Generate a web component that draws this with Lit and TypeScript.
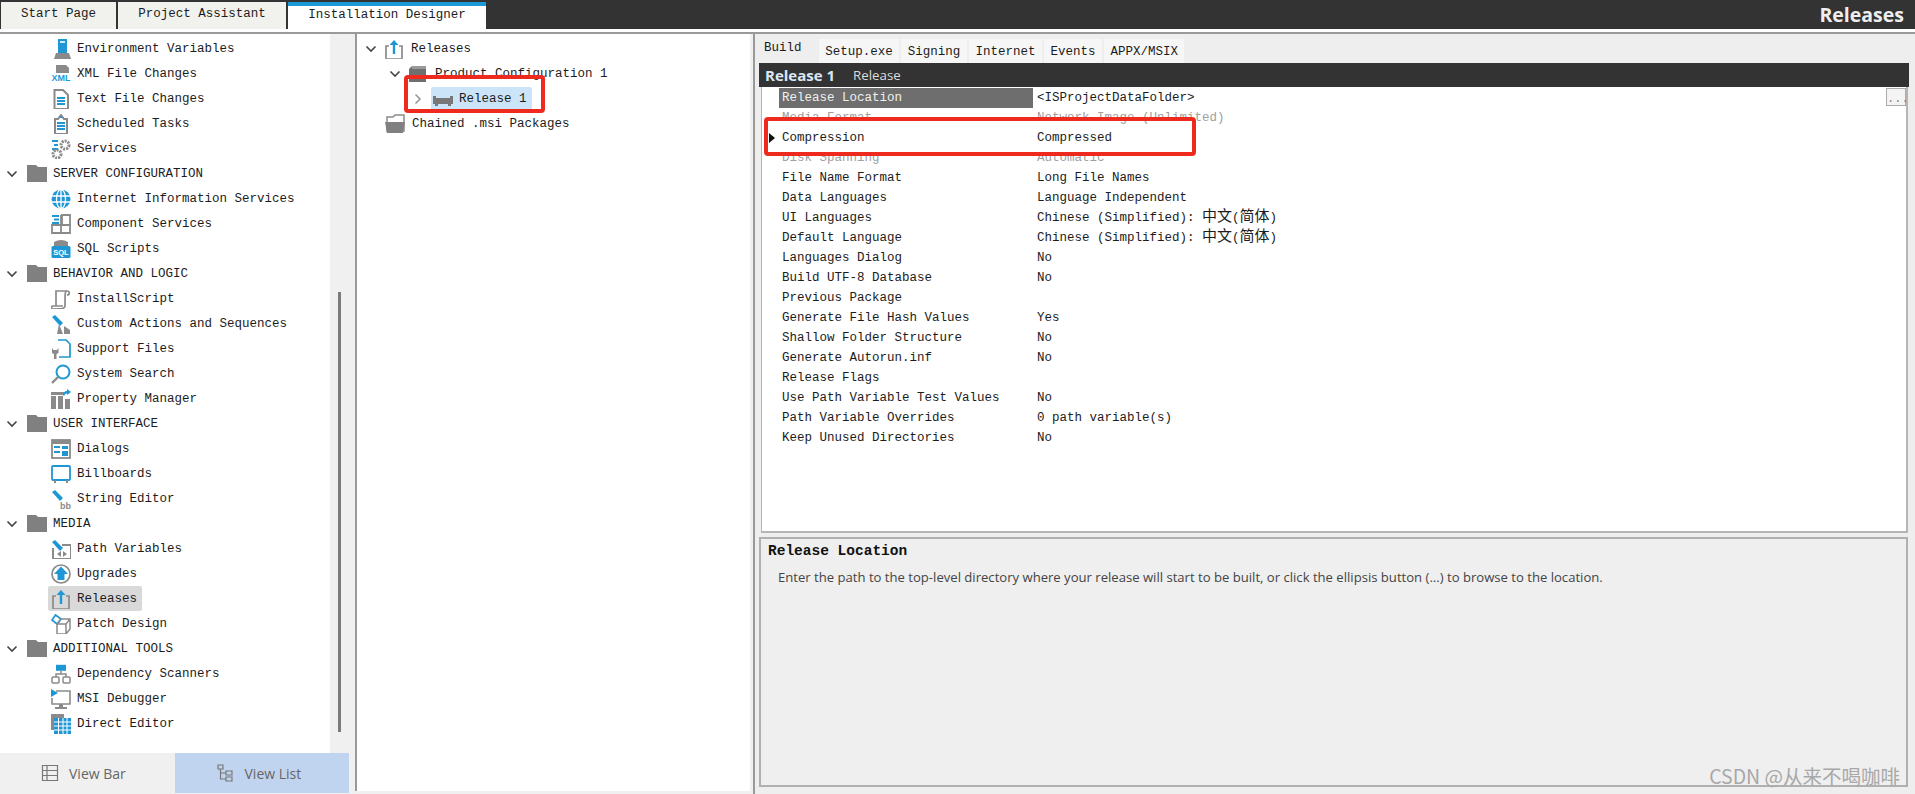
import { LitElement, html, css, svg } from "lit";
import { customElement } from "lit/decorators.js";

const B = "#1f97d4";
const G = "#8a8a8a";
const pencil = svg`<path d="M1 3 L4 1 L12 9 L9 12 Z" fill="${B}"/>`;
const icons: Record<string, unknown> = {
  env: svg`<rect x="7" y="0" width="9" height="14" fill="${B}"/><rect x="9" y="2" width="5" height="2" fill="#cfe8f6"/><path d="M3 20 L5 14 H18 L20 20 Z" fill="${G}"/>`,
  xml: svg`<path d="M5 1 H15 L18 4 V10 H5 Z" fill="${G}"/><rect x="0" y="9" width="20" height="10" fill="#fff"/><text x="10" y="17" text-anchor="middle" font-size="9" font-weight="700" font-family="Liberation Sans" fill="${B}">XML</text>`,
  text: svg`<path d="M3.5 1 H12 L17 6 V20 H3.5 Z" fill="#fff" stroke="${G}" stroke-width="2"/><path d="M6 9 H14 M6 12 H14 M6 15 H14" stroke="${B}" stroke-width="2"/>`,
  sched: svg`<path d="M4 5 H7 L10 1 L13 5 H16 V20 H4 Z" fill="#fff" stroke="${G}" stroke-width="2"/><path d="M6 9 H14 M6 12 H14 M6 15 H14" stroke="${B}" stroke-width="2"/><path d="M8 4 L10 2 L12 4 Z" fill="${B}"/>`,
  services: svg`<path d="M1 1 H7 V3 H1 Z M3 5 H7 V7 H3 Z M1 9 H7 V11 H1 Z" fill="${B}"/><circle cx="14" cy="6" r="4" fill="none" stroke="${G}" stroke-width="3" stroke-dasharray="2 1"/><circle cx="6" cy="15" r="4" fill="none" stroke="${G}" stroke-width="3" stroke-dasharray="2 1"/>`,
  iis: svg`<circle cx="10" cy="10" r="9.5" fill="${B}"/><path d="M1 7 H19 M1 13 H19 M10 0.5 V19.5" stroke="#fff" stroke-width="1.3"/><ellipse cx="10" cy="10" rx="4.5" ry="9.5" fill="none" stroke="#fff" stroke-width="1.3"/>`,
  comp: svg`<path d="M11 1 H19 V19 H1 V11 H11 Z M1 11 H19 M10 1 V19" fill="none" stroke="${G}" stroke-width="1.8"/><path d="M1 1 H8 V3 H1 Z M3 4.5 H8 V6.5 H3 Z M1 8 H8 V10 H1 Z" fill="${B}"/>`,
  sql: svg`<path d="M3 3 Q10 -1 17 3 V8 H3 Z" fill="${G}"/><rect x="0.5" y="7" width="19" height="12" rx="1.5" fill="${B}"/><text x="10" y="16" text-anchor="middle" font-size="7.5" font-weight="700" font-family="Liberation Sans" fill="#fff">SQL</text>`,
  install: svg`<path d="M5 17 V2 H16 C19 2 19 6 16 6 M16 2 C14 2 14 4 14 17 C14 20 10 20 2 20 C0 20 0 17 2 17 H12" fill="none" stroke="${G}" stroke-width="1.7"/>`,
  custom: svg`${pencil}<path d="M6 20 L8 10 L12 20 Z M13 20 V12 L19 16 V20 Z" fill="${G}"/>`,
  support: svg`<path d="M7 1 H15 L19 5 V18 H8" fill="none" stroke="${B}" stroke-width="1.7"/><path d="M1 9 L2.5 11 H6 L7.5 9 V14 L5.5 15 V20 H3 V15 L1 14 Z" fill="${G}"/>`,
  search: svg`<circle cx="12" cy="8" r="6.5" fill="none" stroke="${B}" stroke-width="2"/><path d="M7 13 L1 19" stroke="${G}" stroke-width="2.4"/>`,
  prop: svg`<path d="M0 3 H13 V6 H0 Z M0 7 H5 V20 H0 Z M7 7 H12 V20 H7 Z M14 10 H19 V20 H14 Z" fill="${G}"/><path d="M12 6 C13 2 15 2 16 2 V0 L20 3 L16 6 V4.5 C15 4.5 14 5 13 7 Z" fill="${B}"/>`,
  dialogs: svg`<rect x="1" y="1" width="18" height="18" fill="#fff" stroke="${G}" stroke-width="1.8"/><rect x="1" y="1" width="18" height="4" fill="${G}"/><path d="M3 7 H9 V9 H3 Z M11 7 H17 V10 H11 Z M3 12 H9 V14 H3 Z M11 12 H17 V17 H11 Z" fill="${B}"/>`,
  bill: svg`<rect x="1" y="2" width="18" height="14" rx="1" fill="#fff" stroke="${B}" stroke-width="1.8"/><path d="M4 16 V19 M16 16 V19" stroke="${G}" stroke-width="2"/>`,
  string: svg`${pencil}<text x="9" y="19.5" font-size="9" font-family="Liberation Sans" font-weight="700" fill="${G}">bb</text>`,
  path: svg`${pencil}<path d="M2 9 V20 H20 V6 H11" fill="none" stroke="${G}" stroke-width="2"/><path d="M6 15 L10 12 V18 Z M16 15 L12 12 V18 Z" fill="${G}"/>`,
  up: svg`<circle cx="10" cy="10" r="9" fill="#fff" stroke="${G}" stroke-width="1.7"/><path d="M10 2.5 L17 10 H13.5 V16 H6.5 V10 H3 Z" fill="${B}"/>`,
  rel: svg`<path d="M5 7 H2 V20 H18 V7 H15" fill="none" stroke="${G}" stroke-width="1.7"/><path d="M10 1 L14.5 6 H11.2 V15 H8.8 V6 H5.5 Z" fill="${B}"/>`,
  patch: svg`<path d="M4.5 1 L10 5 L6 10 L1 6 Z" fill="#fff" stroke="${B}" stroke-width="1.7"/><path d="M9 5 H19 V15 L15 20 H6 V10 L9 7 M6 10 H15 V20 M15 10 L19 5" fill="none" stroke="${G}" stroke-width="1.5"/>`,
  dep: svg`<rect x="5" y="0.8" width="10" height="6" fill="${B}"/><path d="M10 7 V10 M5 13 V10 H15 V13" fill="none" stroke="${G}" stroke-width="1.5"/><rect x="1" y="13" width="7" height="6" rx="1" fill="#fff" stroke="${G}" stroke-width="1.5"/><rect x="12" y="13" width="7" height="6" rx="1" fill="#fff" stroke="${G}" stroke-width="1.5"/>`,
  msi: svg`<path d="M5 2 H19 V15 H1 V9" fill="#fff" stroke="${G}" stroke-width="1.6"/><path d="M0 0 L7 4 L0 8 Z" fill="${B}"/><path d="M8 15 H12 V18 H8 Z M4 18 H16 V20 H4 Z" fill="${G}"/>`,
  direct: svg`<rect x="0" y="0" width="13" height="4" fill="${G}"/><rect x="0" y="4" width="3" height="12" fill="${G}"/><rect x="3" y="4" width="17" height="16" fill="${B}"/><path d="M3 8 H20 M3 12 H20 M3 16 H20 M7.5 4 V20 M12 4 V20 M16 4 V20" stroke="#fff" stroke-width="1"/>`,
  folder: svg`<path d="M0 1 H9 L11 3 H20 V18 H0 Z" fill="#808080"/>`,
  pfolder: svg`<path d="M2 5 L5 2 H19 V18 H2 Z" fill="#6f6f6f"/><path d="M5 2 H19 V5 H5 Z" fill="#9a9a9a"/>`,
  ofolder: svg`<path d="M2 3 H8 L10 1 H19 V17 H2 Z" fill="#fff" stroke="${G}" stroke-width="1.5"/><path d="M0 8 H20 L18 19 H2 Z" fill="#808080"/>`,
  device: svg`<path d="M0 7 H3 V9 H17 V7 H20 V15 H18 V17 H15 V15 H5 V17 H2 V15 H0 Z" fill="#777"/>`,
};
const icon = (n: string) => html`<svg class="ic" viewBox="0 0 20 20" width="20" height="20" aria-hidden="true">${icons[n]}</svg>`;

const down = html`<svg class="chev" viewBox="0 0 12 12" width="12" height="12" aria-hidden="true"><path d="M1.5 3.5 L6 8 L10.5 3.5" fill="none" stroke="#444" stroke-width="1.6"/></svg>`;
const right = html`<svg class="chev" viewBox="0 0 12 12" width="12" height="12" aria-hidden="true"><path d="M3.5 1.5 L8 6 L3.5 10.5" fill="none" stroke="#999" stroke-width="1.6"/></svg>`;

type Nav = { t: string; i?: string; h?: boolean; sel?: boolean };
const nav: Nav[] = [
  { t: "Environment Variables", i: "env" }, { t: "XML File Changes", i: "xml" }, { t: "Text File Changes", i: "text" },
  { t: "Scheduled Tasks", i: "sched" }, { t: "Services", i: "services" }, { t: "SERVER CONFIGURATION", h: true },
  { t: "Internet Information Services", i: "iis" }, { t: "Component Services", i: "comp" }, { t: "SQL Scripts", i: "sql" },
  { t: "BEHAVIOR AND LOGIC", h: true }, { t: "InstallScript", i: "install" }, { t: "Custom Actions and Sequences", i: "custom" },
  { t: "Support Files", i: "support" }, { t: "System Search", i: "search" }, { t: "Property Manager", i: "prop" },
  { t: "USER INTERFACE", h: true }, { t: "Dialogs", i: "dialogs" }, { t: "Billboards", i: "bill" }, { t: "String Editor", i: "string" },
  { t: "MEDIA", h: true }, { t: "Path Variables", i: "path" }, { t: "Upgrades", i: "up" }, { t: "Releases", i: "rel", sel: true },
  { t: "Patch Design", i: "patch" }, { t: "ADDITIONAL TOOLS", h: true }, { t: "Dependency Scanners", i: "dep" },
  { t: "MSI Debugger", i: "msi" }, { t: "Direct Editor", i: "direct" },
];

const zh = html`Chinese (Simplified): <span class="cjk">中文</span>(<span class="cjk">简体</span>)`;
type Prop = { l: string; v: unknown; off?: boolean; sel?: boolean; cur?: boolean };
const props: Prop[] = [
  { l: "Release Location", v: "<ISProjectDataFolder>", sel: true },
  { l: "Media Format", v: "Network Image (Unlimited)", off: true },
  { l: "Compression", v: "Compressed", cur: true },
  { l: "Disk Spanning", v: "Automatic", off: true },
  { l: "File Name Format", v: "Long File Names" },
  { l: "Data Languages", v: "Language Independent" },
  { l: "UI Languages", v: zh }, { l: "Default Language", v: zh },
  { l: "Languages Dialog", v: "No" }, { l: "Build UTF-8 Database", v: "No" },
  { l: "Previous Package", v: "" }, { l: "Generate File Hash Values", v: "Yes" },
  { l: "Shallow Folder Structure", v: "No" }, { l: "Generate Autorun.inf", v: "No" },
  { l: "Release Flags", v: "" }, { l: "Use Path Variable Test Values", v: "No" },
  { l: "Path Variable Overrides", v: "0 path variable(s)" }, { l: "Keep Unused Directories", v: "No" },
];

@customElement("app-root")
export class AppRoot extends LitElement {
  static styles = css`
    :host { display: flex; flex-direction: column; width: 1915px; height: 794px; overflow: hidden; position: relative; background: #f0f0f0;
      font: 12.5px/1 "Liberation Mono", "Noto Sans CJK SC", monospace; color: #1c1c1c; }
    .top { height: 29px; flex: none; background: #333; display: flex; align-items: flex-end; padding-left: 1px; gap: 2px; }
    .tab { height: 27px; box-sizing: border-box; background: #f1f1ed; display: flex; align-items: center; justify-content: center; padding-bottom: 2px; }
    .tab.a { width: 115px; } .tab.b { width: 168px; }
    .tab.c { width: 198px; height: 27px; background: #fff; border-top: 4px solid #1d9ad6; padding-bottom: 4px; }
    .title { margin-left: auto; margin-right: 11px; align-self: center; font: 700 19.5px "Open Sans", sans-serif; color: #eee; }
    .rule { height: 3px; flex: none; background: #fff; border-bottom: 2px solid #9a9a9a; }
    .main { flex: 1; display: flex; min-height: 0; }

    .side { width: 350px; flex: none; display: flex; flex-direction: column; }
    .side-top { flex: 1; display: flex; min-height: 0; }
    .list { width: 330px; background: #fff; padding-top: 2px; box-sizing: border-box; }
    .scroll { width: 20px; }
    .thumb { width: 3px; height: 440px; margin: 258px 0 0 8px; background: #7a7a7a; }
    .row { height: 25px; display: flex; align-items: center; white-space: pre; }
    .row span { padding-top: 2px; }
    .nav-item { padding-left: 51px; }
    .nav-item .ic { margin-right: 6px; }
    .nav-item.sel { margin-left: 48px; padding-left: 3px; width: 94px; box-sizing: border-box; background: #d9d9d9; border-radius: 2px; }
    .nav-head { padding-left: 6px; }
    .nav-head .chev { margin-right: 9px; }
    .nav-head .ic { margin-right: 6px; }
    .foot { height: 40px; margin-bottom: 1px; flex: none; display: flex; font: 14px "Open Sans", sans-serif; color: #666; width: 349px; }
    .fbtn { width: 174.5px; display: flex; align-items: center; gap: 10px; box-sizing: border-box; }
    .fbtn.v1 { padding-left: 41px; background: #f0f0f0; }
    .fbtn.v2 { padding-left: 42px; gap: 12px; background: #c1d4ef; }

    .tree { width: 395px; flex: none; margin-left: 5px; border-left: 2px solid #999; background: #fff; padding-top: 2px; box-sizing: border-box; margin-bottom: 3px; }
    .tree .chev { margin-right: 4px; }
    .t0 { padding-left: 8px; } .t0 .ic { margin: 0 7px 0 3px; }
    .t1 { padding-left: 32px; } .t1 .ic { margin-right: 8px; margin-left: 2px; }
    .t2 { padding-left: 55px; } .t2 .chev { margin-right: 7px; }
    .t3 { padding-left: 28px; } .t3 .ic { margin-right: 7px; }
    .pick { display: flex; align-items: center; height: 24px; width: 101px; padding-left: 2px; box-sizing: border-box; background: #cce4f7; border-radius: 2px; }
    .pick .ic { margin-right: 6px; }

    .right { flex: 1; margin-left: 3px; border-left: 2px solid #999; display: flex; flex-direction: column; background: #eee; padding-right: 6px; min-width: 0; }
    .tabs { height: 29px; flex: none; display: flex; align-items: flex-end; gap: 2px; }
    .ptab { height: 24px; padding: 2px 6.5px 0; box-sizing: border-box; background: #f6f6f6; display: flex; align-items: center; }
    .ptab.on { height: 27px; width: 61.85px; padding: 0 0 3px 9px; background: transparent; }
    .band { height: 24px; flex: none; margin-left: 4px; background: #333; display: flex; align-items: center; gap: 18px; padding-left: 6px; font: 13.3px "Open Sans", sans-serif; color: #dcdcdc; }
    .band b { color: #dbe7f5; font-weight: 700; font-size: 15px; }
    .grid { height: 446px; flex: none; margin-left: 6px; margin-right: 1px; background: #fff; border: 1px solid #b5b5b5; border-width: 0 2px 2px 1px; box-sizing: border-box; padding-top: 1px; position: relative; }
    .prow { height: 20px; display: flex; align-items: center; white-space: pre; }
    .gut { width: 17px; flex: none; display: flex; justify-content: flex-end; padding-right: 4px; box-sizing: border-box; }
    .tri { width: 0; height: 0; border-left: 6px solid #111; border-top: 5px solid transparent; border-bottom: 5px solid transparent; }
    .lab { width: 254px; height: 20px; flex: none; display: flex; align-items: center; padding-left: 3px; box-sizing: border-box; }
    .lab.sel { background: #6e6e6e; color: #f0f0f0; }
    .val { margin-left: 4px; }
    .cjk { font-size: 15px; font-family: "Noto Sans CJK SC", sans-serif; line-height: 0; }
    .off { color: #a0a0a0; }
    .dots { position: absolute; right: 0; top: 1px; width: 20px; height: 18px; box-sizing: border-box; background: #f4f4f4; border: 1px solid #aaa; color: #888; font-size: 12px; text-align: center; line-height: 20px; }
    .desc { flex: none; height: 250px; margin: 4px 1px 0 4px; background: #efefef; border: 2px solid #b0b0b0; box-sizing: border-box; padding: 3px 7px; }
    .desc h4 { margin: 0; font: 700 14.5px/18px "Liberation Mono", monospace; color: #111; }
    .desc p { margin: 8px 0 0 10px; font: 13.1px/18px "Open Sans", sans-serif; color: #444; white-space: nowrap; }

    .mark { position: absolute; border: 4px solid #ee2a1e; border-radius: 4px; box-sizing: border-box; pointer-events: none; }
    .m1 { left: 404px; top: 75px; width: 141px; height: 38px; }
    .m2 { left: 764px; top: 117px; width: 432px; height: 39px; }
    .wm { position: absolute; right: 15px; bottom: 4px; font: 19.5px "Noto Sans CJK SC", "Liberation Sans", sans-serif; color: #a8a8a8; }
  `;

  render() {
    return html`
      <div class="top">
        <div class="tab a">Start Page</div>
        <div class="tab b">Project Assistant</div>
        <div class="tab c">Installation Designer</div>
        <div class="title">Releases</div>
      </div>
      <div class="rule"></div>
      <div class="main">
        <aside class="side">
          <div class="side-top">
            <div class="list">
              ${nav.map((n) => n.h
                ? html`<div class="row nav-head">${down}${icon("folder")}<span>${n.t}</span></div>`
                : html`<div class="row nav-item ${n.sel ? "sel" : ""}">${icon(n.i!)}<span>${n.t}</span></div>`)}
            </div>
            <div class="scroll"><div class="thumb"></div></div>
          </div>
          <div class="foot">
            <div class="fbtn v1">
              <svg viewBox="0 0 18 18" width="18" height="18" aria-hidden="true"><path d="M1.5 1.5 H16.5 V16.5 H1.5 Z M1.5 6.5 H16.5 M1.5 11.5 H16.5 M6 1.5 V16.5" fill="none" stroke="#777" stroke-width="1.2"/></svg>
              <span>View Bar</span>
            </div>
            <div class="fbtn v2">
              <svg viewBox="0 0 16 18" width="16" height="18" aria-hidden="true"><path d="M1 1 H6 V5 H1 Z M9 7 H15 V11 H9 Z M9 13 H15 V17 H9 Z M3.5 5 V15 H9 M3.5 9 H9" fill="none" stroke="#777" stroke-width="1.2"/></svg>
              <span>View List</span>
            </div>
          </div>
        </aside>
        <section class="tree">
          <div class="row t0">${down}${icon("rel")}<span>Releases</span></div>
          <div class="row t1">${down}${icon("pfolder")}<span>Product Configuration 1</span></div>
          <div class="row t2">${right}<div class="pick">${icon("device")}<span>Release 1</span></div></div>
          <div class="row t3">${icon("ofolder")}<span>Chained .msi Packages</span></div>
        </section>
        <section class="right">
          <div class="tabs">
            <div class="ptab on">Build</div>
            <div class="ptab">Setup.exe</div>
            <div class="ptab">Signing</div>
            <div class="ptab">Internet</div>
            <div class="ptab">Events</div>
            <div class="ptab">APPX/MSIX</div>
          </div>
          <div class="band"><b>Release 1</b><span>Release</span></div>
          <div class="grid">
            ${props.map((p) => html`<div class="prow ${p.off ? "off" : ""}">
              <div class="gut">${p.cur ? html`<div class="tri"></div>` : ""}</div>
              <div class="lab ${p.sel ? "sel" : ""}">${p.l}</div>
              <div class="val">${p.v}</div>
            </div>`)}
            <div class="dots">...</div>
          </div>
          <div class="desc">
            <h4>Release Location</h4>
            <p>Enter the path to the top-level directory where your release will start to be built, or click the ellipsis button (...) to browse to the location.</p>
          </div>
        </section>
      </div>
      <div class="mark m1"></div>
      <div class="mark m2"></div>
      <div class="wm">CSDN @从来不喝咖啡</div>
    `;
  }
}
